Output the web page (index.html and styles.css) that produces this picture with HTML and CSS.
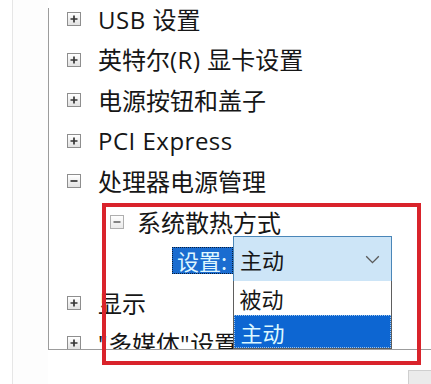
FILE: index.html
```html
<!DOCTYPE html>
<html lang="zh-CN">
<head>
<meta charset="utf-8">
<title>处理器电源管理</title>
<link rel="stylesheet" href="styles.css">
</head>
<body>
<div class="screen">
  <div class="gutter"></div>
  <div class="spacer"></div>
  <div class="main">
    <div class="panel">
      <ul class="tree">
        <li class="row"><span class="box"><svg viewBox="0 0 12 12"><path d="M2.5 6h7M6 2.5v7"/></svg></span><span class="label"><span class="latin">USB </span>设置</span></li>
        <li class="row"><span class="box"><svg viewBox="0 0 12 12"><path d="M2.5 6h7M6 2.5v7"/></svg></span><span class="label">英特尔<span class="latin">(R) </span>显卡设置</span></li>
        <li class="row"><span class="box"><svg viewBox="0 0 12 12"><path d="M2.5 6h7M6 2.5v7"/></svg></span><span class="label">电源按钮和盖子</span></li>
        <li class="row"><span class="box"><svg viewBox="0 0 12 12"><path d="M2.5 6h7M6 2.5v7"/></svg></span><span class="label"><span class="latin">PCI Express</span></span></li>
        <li class="row"><span class="box"><svg viewBox="0 0 12 12"><path d="M2.5 6h7"/></svg></span><span class="label">处理器电源管理</span></li>
        <li class="row sub"><span class="box"><svg viewBox="0 0 12 12"><path d="M2.5 6h7"/></svg></span><span class="label">系统散热方式</span></li>
        <li class="row setting">
          <span class="setting-label">设置:</span>
          <div class="combo">
            <span class="combo-value">主动</span>
            <svg class="chevron" viewBox="0 0 16 10"><path d="M1 1.5l7 7 7-7"/></svg>
            <ul class="options">
              <li class="option">被动</li>
              <li class="option selected">主动</li>
            </ul>
          </div>
        </li>
        <li class="row"><span class="box"><svg viewBox="0 0 12 12"><path d="M2.5 6h7M6 2.5v7"/></svg></span><span class="label">显示</span></li>
        <li class="row"><span class="box"><svg viewBox="0 0 12 12"><path d="M2.5 6h7M6 2.5v7"/></svg></span><span class="label"><span class="latin">"</span>多媒体<span class="latin">"</span>设置</span></li>
      </ul>
    </div>
    <div class="footer"><span class="corner-btn"></span></div>
  </div>
  <div class="highlight"></div>
</div>
</body>
</html>
```

FILE: styles.css
```css
* { box-sizing: border-box; }
html, body { margin: 0; padding: 0; background: #ffffff; }
body { width: 431px; height: 384px; overflow: hidden; }

.screen {
  position: relative;
  display: flex;
  width: 431px;
  height: 384px;
  font-family: "Noto Sans CJK SC", "Open Sans", sans-serif;
  font-size: 24px;
  color: #161616;
}

.gutter {
  width: 13px;
  flex: none;
  border-right: 1px solid #e6e6e6;
}
.spacer {
  width: 35px;
  flex: none;
  background: #fdfdfd;
}

.main {
  flex: 1;
  display: flex;
  flex-direction: column;
}

.panel {
  position: relative;
  height: 352px;
  padding-left: 1px;
  border-bottom: 1px solid #9c9c9c;
  overflow: hidden;
  background: #ffffff;
}
.panel::before {
  content: "";
  position: absolute;
  left: 0;
  top: 8px;
  bottom: 0;
  width: 1px;
  background: #9c9c9c;
}

.tree {
  list-style: none;
  margin: -1px 0 0 0;
  padding: 0;
}

.row {
  height: 40.5px;
  display: flex;
  align-items: center;
  padding-left: 18px;
  white-space: nowrap;
}
.row.sub { padding-left: 61px; }
.row.sub .box { margin-right: 13px; opacity: 0.7; }
.row.setting { padding-left: 123px; font-size: 22px; }

.box {
  width: 14px;
  height: 14px;
  flex: none;
  margin-right: 17px;
  border: 1px solid #8e8e8e;
  background: linear-gradient(#ffffff, #e2e2e2);
  display: flex;
}
.box svg {
  width: 12px;
  height: 12px;
  stroke: #353535;
  stroke-width: 1.7;
  fill: none;
}

.label { line-height: 1; }
.latin {
  font-family: "Open Sans", sans-serif;
  letter-spacing: 0.5px;
}

.setting-label {
  height: 27px;
  width: 61px;
  flex: none;
  margin-top: -4px;
  padding-left: 4px;
  display: flex;
  align-items: center;
  background: #1a6cd0;
  color: #dff6ff;
  border: 1px dotted #0b1e3a;
  line-height: 1;
}

.combo {
  position: relative;
  width: 159px;
  height: 46px;
  flex: none;
  margin-top: -6px;
  display: flex;
  align-items: center;
  padding-left: 6px;
  background: #cde5f7;
  border: 1.5px solid #4a86b8;
}
.combo-value { line-height: 1; flex: 1; }
.chevron {
  width: 15px;
  height: 9px;
  margin-right: 11px;
  fill: none;
  stroke: #5a5a5a;
  stroke-width: 1.5;
}

.options {
  position: absolute;
  left: -1.5px;
  top: 100%;
  width: 159px;
  height: 68px;
  margin: 0;
  padding: 0;
  list-style: none;
  background: #ffffff;
  border: 1px solid #5e5e5e;
  border-top: none;
  z-index: 2;
}
.option {
  height: 34px;
  display: flex;
  align-items: center;
  padding-left: 6px;
  line-height: 1;
}
.option.selected {
  height: 33px;
  background: #0d66d2;
  color: #dcf8ff;
  border: 1px dotted #9ec4e8;
}

.footer {
  flex: 1;
  display: flex;
  justify-content: flex-end;
  align-items: flex-start;
  padding-top: 20px;
}
.corner-btn {
  width: 23px;
  height: 14px;
  background: #ebebeb;
  border-top: 1px solid #cfcfcf;
  border-left: 1px solid #cfcfcf;
}

.highlight {
  position: absolute;
  left: 102px;
  top: 203px;
  width: 319px;
  height: 162px;
  border: 4px solid #d9232b;
  z-index: 3;
  pointer-events: none;
}
```
